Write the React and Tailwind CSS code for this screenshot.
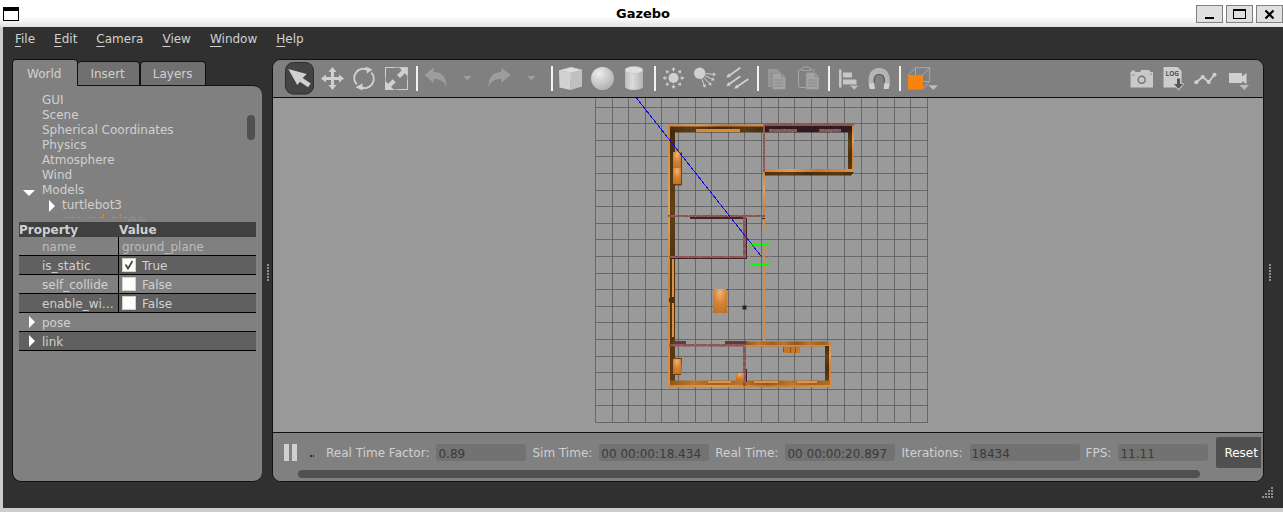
import React from "react";

const MENUS = ["File", "Edit", "Camera", "View", "Window", "Help"];
const TREE = ["GUI", "Scene", "Spherical Coordinates", "Physics", "Atmosphere", "Wind"];

function Icon({ children, wide }) {
  return (
    <svg
      viewBox={wide ? "0 0 38 33" : "0 0 32 33"}
      className={wide ? "h-[33px] w-[38px]" : "h-[33px] w-8"}
      fill="none"
      aria-hidden="true"
    >
      {children}
    </svg>
  );
}

function Tool({ label, children, wide }) {
  return (
    <button type="button" aria-label={label} className="shrink-0">
      <Icon wide={wide}>{children}</Icon>
    </button>
  );
}

function Separator() {
  return (
    <div className="flex h-[25px] w-[7px] shrink-0 justify-end pr-px">
      <div className="w-0.5 bg-[#f4f2ee]" />
    </div>
  );
}

const L = "#d0d0d0";
const D = "#9d9d9d";

function ray(cx, cy, angle, r0, r1, key) {
  const a = (angle * Math.PI) / 180;
  const c = Math.cos(a);
  const s = Math.sin(a);
  const bx = cx + c * (r1 - 3);
  const by = cy + s * (r1 - 3);
  return (
    <g key={key}>
      <path d={`M${cx + c * r0} ${cy + s * r0}L${bx} ${by}`} stroke={L} strokeWidth="1" />
      <path
        d={`M${cx + c * r1} ${cy + s * r1}L${bx - s * 2} ${by + c * 2}L${bx + s * 2} ${by - c * 2}Z`}
        fill={L}
      />
    </g>
  );
}

function Toolbar() {
  return (
    <div className="flex h-[38px] shrink-0 items-center border-b border-[#111] bg-[#808080] pl-[11px] pr-[9px]">
      <Tool label="Select">
        <rect x="1.5" y="0.5" width="28" height="31.5" rx="8" fill="#444" stroke="#2b2b2b" />
        <path d="M4.3 7L22.7 12L18.7 16L26.7 21.5L24 25.2L16 19.7L13.3 23Z" fill={L} />
      </Tool>
      <Tool label="Translate">
        <path
          d="M16.5 5L20.5 10H18V15H23V12.5L28 16.5L23 20.5V18H18V23H20.5L16.5 28L12.5 23H15V18H10V20.5L5 16.5L10 12.5V15H15V10H12.5Z"
          fill={L}
        />
      </Tool>
      <Tool label="Rotate">
        <path d="M8.800 22.300A9.200 9.200 0 0 1 18.500 7.300" stroke={L} strokeWidth="2" />
        <path d="M23.400 10.700A9.200 9.200 0 0 1 13.500 25.500" stroke={L} strokeWidth="2" />
        <path d="M17.500 4.500L24.500 7.500L19 11.500Z" fill={L} />
        <path d="M14.500 21.300V28.500L7.500 25.300Z" fill={L} />
      </Tool>
      <Tool label="Scale">
        <path d="M15 5.5H5.5V15M5.5 22V27.5H11M18 27.5H27.5V18" stroke={L} />
        <path d="M5.5 5.5H27.5V27.5H5.5Z" stroke={L} strokeOpacity="0.6" />
        <path d="M27.7 5.2V14L24.8 11.3L20 16L17 13L21.8 8.2L19 5.2Z" fill={L} />
        <path d="M5.2 27.8V19L8.2 21.8L12.8 17.2L15.8 20.2L11 24.8L14 27.8Z" fill={L} />
      </Tool>
      <Separator />
      <Tool label="Undo">
        <path d="M5.3 13L14.7 5.7V10C23 10 28 15.500 27.300 25.300C25.500 19.500 21.500 17 14.700 17V21Z" fill={D} />
      </Tool>
      <Tool label="Undo history">
        <path d="M12.500 14H20.500L16.500 18.500Z" fill={D} />
      </Tool>
      <Tool label="Redo">
        <path d="M27.700 13L18.300 5.700V10C10 10 5 15.500 5.700 25.300C7.500 19.500 11.500 17 18.300 17V21Z" fill={D} />
      </Tool>
      <Tool label="Redo history">
        <path d="M12.500 14H20.500L16.500 18.500Z" fill={D} />
      </Tool>
      <Separator />
      <Tool label="Box">
        <path d="M5 8.500L17 10.500L16.500 28L5.500 25.500Z" fill="#d2d2d2" />
        <path d="M17 10.500L28 8V24.500L16.500 28Z" fill="#c0c0c0" />
        <path d="M5 8.500L17 5.200L28 8L17 10.500Z" fill="#dedede" stroke="#cfcfcf" strokeWidth="0.5" />
      </Tool>
      <Tool label="Sphere">
        <defs>
          <radialGradient id="ball" cx="0.35" cy="0.28" r="0.75">
            <stop offset="0" stopColor="#ededed" />
            <stop offset="0.5" stopColor="#cfcfcf" />
            <stop offset="1" stopColor="#b0b0b0" />
          </radialGradient>
        </defs>
        <circle cx="16.500" cy="16.500" r="11.500" fill="url(#ball)" />
      </Tool>
      <Tool label="Cylinder">
        <defs>
          <linearGradient id="can">
            <stop offset="0" stopColor="#bcbcbc" />
            <stop offset="0.4" stopColor="#dcdcdc" />
            <stop offset="1" stopColor="#b2b2b2" />
          </linearGradient>
        </defs>
        <path d="M7 8V24.500C7 29 25 29 25 24.500V8Z" fill="url(#can)" />
        <ellipse cx="16" cy="8" rx="9" ry="3.600" fill="#dedede" stroke="#bbb" strokeWidth="0.6" />
      </Tool>
      <Separator />
      <Tool label="Point light">
        <circle cx="16.500" cy="16" r="5" fill={L} />
        {[0, 45, 90, 135, 180, 225, 270, 315].map((a) => ray(16.5, 16, a, 6.5, 11, a))}
      </Tool>
      <Tool label="Spot light">
        <circle cx="10.700" cy="11.300" r="5.700" fill={L} />
        {ray(10.7, 11.3, 4, 6, 16.5, 1)}
        {ray(10.7, 11.3, 25, 6, 16.5, 2)}
        {ray(10.7, 11.3, 46, 6, 17, 3)}
        {ray(10.7, 11.3, 69, 6, 15.5, 4)}
      </Tool>
      <Tool label="Directional light">
        <path d="M19.300 5.700L8 13.700M19.300 14.300L8 22.300M27.300 17L16 24.800" stroke={L} strokeWidth="1.800" />
        <path
          d="M5.300 15.600L7.300 11.500L9.700 14.900ZM5.300 24.200L7.300 20.100L9.700 23.500ZM13.300 26.700L15.300 22.600L17.700 26Z"
          fill={L}
        />
      </Tool>
      <Separator />
      <Tool label="Copy">
        <path d="M8 7H17L21 11V25H8Z" fill="#989898" />
        <path d="M9.500 12H18M9.500 15H18M9.500 18H18M9.500 21H18" stroke="#878787" />
        <path d="M12.500 11H21.500L25.500 15V27.500H12.500Z" fill="#a3a3a3" stroke="#8a8a8a" strokeWidth="0.700" />
        <path d="M21.500 11V15H25.500M14.500 18H23.500M14.500 21H23.500M14.500 24H23.500" stroke="#888" />
      </Tool>
      <Tool label="Paste">
        <rect x="6.500" y="7.500" width="15.500" height="18" rx="1.500" stroke="#a5a5a5" />
        <path d="M10 8.500V6.500L12 5H16L18.500 6.500V8.500Z" fill="#808080" stroke="#a5a5a5" />
        <path d="M14 10.500H23L27 14.500V27.500H14Z" fill="#a3a3a3" stroke="#8a8a8a" strokeWidth="0.700" />
        <path d="M23 10.500V14.500H27M16 18H25M16 21H25M16 24H25" stroke="#888" />
      </Tool>
      <Separator />
      <Tool label="Align">
        <path d="M8 7.500H10.500V25.500H8ZM12 10.500H21V15.500H12ZM12 17.500H25.500V22.500H12Z" fill="#c6c6c6" />
        <path d="M18.500 23.300H28L23.300 28Z" fill="#bdbdbd" stroke="#808080" strokeWidth="0.500" />
      </Tool>
      <Tool label="Snap">
        <path d="M7 27C3.500 16 6.500 6 16.200 6S29 16 25.500 27H20.700C22.500 18 21 13 16.200 13S10 18 11.800 27Z" fill="#b5b5b5" />
        <path d="M11.300 20.500C10.500 15 12.500 12.500 16.200 12.500S22 15 21.200 20.500" stroke="#555" strokeWidth="1.200" />
        <path d="M5.700 21.500H11.200L11.800 27H7ZM26.800 21.500H21.300L20.700 27H25.500Z" fill="#d2d2d2" />
      </Tool>
      <Separator />
      <Tool label="View angle" wide>
        <path
          d="M6.500 13L13.500 5.700H27.700V19.500L20.500 27M20.500 13L27.700 5.700M13.500 5.700V19.500H27.700M6.500 27L13.500 19.500"
          stroke="#adadad"
          strokeWidth="0.900"
        />
        <rect x="6" y="13" width="15" height="14.500" fill="#fa8310" />
        <path d="M26.500 23.300H36L31.300 28Z" fill="#bdbdbd" />
      </Tool>
      <div className="min-w-0 flex-1" />
      <Tool label="Screenshot">
        <path d="M6 10H14L15.500 8H23L24.500 10H27V25.500H4.500V10Z" fill="#c9c9c9" />
        <path d="M5.500 8.500H9V10H5.500Z" fill="#c9c9c9" />
        <circle cx="15.700" cy="17.700" r="3.500" stroke="#777" strokeWidth="1.500" />
        <path d="M6 13H9M24 12H26" stroke="#909090" />
      </Tool>
      <Tool label="Log data">
        <path d="M5.500 5H19.500L23.500 9V25.500H5.500Z" fill="#cdcdcd" />
        <text x="7.500" y="14" fontSize="6.500" fontWeight="700" fontFamily="Open Sans, sans-serif" fill="#555">
          LOG
        </text>
        <path d="M20.500 28.500L14.500 21.500H26.500Z" fill="#cdcdcd" />
        <path d="M19 16.500H22V22H25L20.500 27L16 22H19Z" fill="#555" />
      </Tool>
      <Tool label="Plot">
        <path d="M6.300 20.300L12.700 15L18.700 20L24.500 12.500" stroke={L} strokeWidth="1.800" />
        <circle cx="6.300" cy="20.300" r="2" fill={L} />
        <circle cx="12.700" cy="15" r="2" fill={L} />
        <circle cx="18.700" cy="20" r="2" fill={L} />
        <circle cx="24.500" cy="12.700" r="2" fill={L} />
      </Tool>
      <Tool label="Record video">
        <path d="M7 11H20V14.500L24.500 11V22L20 19V21H7Z" fill={L} />
        <path d="M17.500 23H27L22.300 28Z" fill="#bdbdbd" />
      </Tool>
    </div>
  );
}

function Scene() {
  const lines = Array.from({ length: 21 }, (_, i) => Math.round(i * 16.6));
  return (
    <div className="flex min-h-0 flex-1 bg-[#9a9a9a]">
      <svg viewBox="273 98 990 334" className="h-full w-full" role="img" aria-label="3D scene, top view">
        <defs>
          <linearGradient id="woodV" x2="0" y2="1">
            <stop offset="0" stopColor="#d08438" />
            <stop offset="0.3" stopColor="#e2a05a" />
            <stop offset="0.6" stopColor="#cf8134" />
            <stop offset="1" stopColor="#dc9044" />
          </linearGradient>
          <linearGradient id="woodH">
            <stop offset="0" stopColor="#d08438" />
            <stop offset="0.3" stopColor="#e39a4b" />
            <stop offset="0.6" stopColor="#c4772b" />
            <stop offset="1" stopColor="#dc9044" />
          </linearGradient>
          <linearGradient id="darkH">
            <stop offset="0" stopColor="#4a2e10" />
            <stop offset="0.25" stopColor="#5f3c14" />
            <stop offset="0.5" stopColor="#442a0f" />
            <stop offset="0.8" stopColor="#583a12" />
            <stop offset="1" stopColor="#452b0e" />
          </linearGradient>
          <linearGradient id="darkV" x2="0" y2="1">
            <stop offset="0" stopColor="#42290e" />
            <stop offset="0.3" stopColor="#624016" />
            <stop offset="0.6" stopColor="#4a3012" />
            <stop offset="1" stopColor="#5c3c14" />
          </linearGradient>
          <radialGradient id="table" cx="0.5" cy="0.15" r="0.9">
            <stop offset="0" stopColor="#f0b678" />
            <stop offset="0.5" stopColor="#d58435" />
            <stop offset="1" stopColor="#bd7024" />
          </radialGradient>
          <linearGradient id="planks" x2="0.3" spreadMethod="reflect">
            <stop offset="0" stopColor="#8f5519" />
            <stop offset="0.5" stopColor="#bd762d" />
            <stop offset="1" stopColor="#99601f" />
          </linearGradient>
          <pattern id="marble" width="13" height="7" patternUnits="userSpaceOnUse">
            <rect width="13" height="7" fill="#8d5553" />
            <path d="M0 0h1v1h-1zM5 1h2v1h-2zM2 3h1v1h-1zM9 4h1v1h-1zM11 2h1v1h-1zM6 6h1v1h-1z" fill="#a4685b" />
            <path d="M3 0h1v1h-1zM8 2h1v1h-1zM0 4h1v1h-1zM5 5h1v1h-1zM11 6h1v1h-1z" fill="#764654" />
            <path d="M4 3h1v1h-1zM9 0h1v1h-1zM12 5h1v1h-1z" fill="#a27c86" />
          </pattern>
        </defs>
        {lines.map((p) => (
          <path
            key={p}
            d={`M${595.5 + p} 98V422.500M595.500 ${422.5 - p}H928`}
            stroke="#555"
            strokeOpacity="0.75"
            strokeWidth="1"
          />
        ))}
        <rect x="273" y="90" width="990" height="8" fill="#808080" />

        <path d="M669 125H765V132.500H675V344H669Z" fill="url(#darkH)" />
        <rect x="670" y="130" width="5" height="254" fill="url(#darkV)" />
        <rect x="668" y="124.500" width="2" height="262" fill="url(#woodV)" />
        <rect x="668" y="124.500" width="96" height="2" fill="url(#woodH)" />
        <rect x="696" y="129" width="44" height="3" fill="#d88a3d" />

        <rect x="764" y="125" width="90" height="7.500" fill="#2f1c22" />
        <rect x="764" y="124" width="90" height="2" fill="url(#marble)" />
        <rect x="769" y="129" width="28" height="3" fill="url(#marble)" />
        <rect x="819" y="129" width="22" height="3" fill="url(#marble)" />
        <rect x="848" y="131" width="5" height="41" fill="url(#darkV)" />
        <rect x="852" y="125.500" width="2" height="48" fill="url(#woodV)" />
        <path d="M764 172H854L851 175.500H764Z" fill="url(#darkH)" />
        <rect x="764" y="169" width="89" height="3" fill="url(#woodH)" />

        <rect x="763" y="125" width="2" height="47" fill="url(#marble)" />
        <rect x="763" y="172" width="2" height="58" fill="url(#woodV)" />
        <rect x="763" y="245" width="2" height="97" fill="#d18b4b" />

        <rect x="690" y="217" width="55" height="2" fill="#432329" />
        <rect x="668" y="215" width="97" height="2" fill="url(#marble)" />
        <rect x="743" y="216" width="3" height="42" fill="url(#marble)" />
        <rect x="746" y="218" width="1" height="40" fill="#432329" />
        <rect x="670" y="258" width="77" height="1" fill="#432329" />
        <rect x="669" y="256" width="76" height="2" fill="url(#marble)" />
        <rect x="762" y="218" width="3" height="1" fill="#3b2410" />

        <rect x="672" y="259" width="2" height="38" fill="#dc9144" />
        <rect x="672" y="303" width="2" height="34" fill="#dc9144" />
        <rect x="669" y="298" width="5" height="4" fill="#4b2d10" />

        <path d="M673 152H682V185.500H674Z" fill="#6b3f12" />
        <rect x="673" y="152" width="8" height="16" fill="url(#table)" />
        <rect x="673" y="168" width="8" height="16" fill="url(#table)" />
        <rect x="713" y="289" width="14" height="24" fill="url(#table)" />
        <rect x="727" y="289" width="1" height="1" fill="#222" />

        <rect x="673" y="341" width="13" height="4" fill="#65383a" />
        <rect x="725" y="341" width="22" height="4" fill="#65383a" />
        <rect x="669" y="344" width="76" height="2.500" fill="url(#marble)" />
        <path d="M746 341.500H828L830 346.500H746Z" fill="url(#planks)" />
        <rect x="746" y="345" width="85" height="1.500" fill="#d68a3c" />
        <rect x="825" y="346" width="4" height="36" fill="url(#darkV)" />
        <rect x="829" y="342.500" width="2" height="44" fill="url(#woodV)" />
        <rect x="670" y="380.500" width="160" height="6" fill="url(#planks)" />
        <rect x="668" y="385" width="163" height="2" fill="url(#woodH)" />
        <rect x="708" y="381" width="23" height="2" fill="#e09345" />
        <rect x="754" y="381" width="24" height="2" fill="#e09345" />
        <rect x="797" y="381" width="20" height="2" fill="#e09345" />
        <rect x="743" y="346" width="3" height="40" fill="url(#marble)" />
        <rect x="746" y="369" width="1" height="13" fill="#432329" />
        <path d="M673 358H682L681 375H673Z" fill="#6b3f12" />
        <rect x="673" y="359" width="8" height="15" fill="url(#table)" />
        <rect x="736" y="373" width="8" height="8" fill="url(#table)" />
        <rect x="783" y="347" width="17" height="6" fill="#c4762a" />
        <path d="M783.500 347V352M790.500 347V353M795.500 347V353" stroke="#8a5219" />

        <path d="M742 305H747V310H742Z" fill="#3a3a3a" fillOpacity="0.5" />
        <path d="M743 306H746V309H743Z" fill="#222" />

        <path d="M636.500 98L761 256" stroke="#1010e0" strokeWidth="1" shapeRendering="crispEdges" />
        <rect x="749.500" y="244.500" width="20" height="20" fill="none" stroke="#00ff00" />
      </svg>
    </div>
  );
}

function Field({ id, label, value, width }) {
  return (
    <>
      <label htmlFor={id} className="h-[17px] shrink-0 whitespace-nowrap pr-px pt-0.5">
        {label}
      </label>
      <input
        id={id}
        readOnly
        defaultValue={value}
        className={`h-[17px] rounded-[3px] bg-[#727272] px-0.5 pt-0.5 leading-[15px] text-[#3a3a3a] outline-none ${width}`}
      />
    </>
  );
}

function StatusBar() {
  return (
    <div className="box-content h-12 shrink-0 border-t border-[#111] bg-[#808080]">
      <div className="flex h-[37px] items-center gap-[6px] overflow-hidden pb-0.5 pl-[11px] pr-0.5 pt-1">
        <button type="button" aria-label="Pause" className="flex h-[17px] shrink-0 gap-[3px]">
          <span className="w-[5px] bg-[#d0d0d0]" />
          <span className="w-[5px] bg-[#d0d0d0]" />
        </button>
        <span className="flex h-[9px] w-[17px] shrink-0 items-end justify-center gap-px" aria-hidden="true">
          <span className="h-0.5 w-[2px] bg-[#303030]" />
          <span className="h-0.5 w-px bg-[#303030]" />
        </span>
        <Field id="rtf" label="Real Time Factor:" value="0.89" width="w-[90px] shrink-0" />
        <Field id="sim" label="Sim Time:" value="00 00:00:18.434" width="w-[110px] shrink-0" />
        <Field id="real" label="Real Time:" value="00 00:00:20.897" width="w-[110px] shrink-0" />
        <Field id="iter" label="Iterations:" value="18434" width="w-[110px] shrink-0" />
        <Field id="fps" label="FPS:" value="11.11" width="w-[90px] shrink-0" />
        <button
          type="button"
          className="ml-0.5 h-[31px] min-w-0 flex-1 rounded-l-[2px] bg-[#505050] pl-2 pt-0.5 text-left text-white"
        >
          Reset
        </button>
      </div>
      <div className="ml-[25px] mr-[63px] h-2 rounded-full bg-[#505050]" />
    </div>
  );
}

function Check({ id, checked, label }) {
  return (
    <label htmlFor={id} className="flex items-center gap-[6px]">
      <span className="relative flex">
        <input
          id={id}
          type="checkbox"
          defaultChecked={checked}
          className="peer h-[14px] w-[14px] appearance-none border border-[#d4d0c8] bg-[#fffdfa]"
        />
        <svg viewBox="0 0 14 14" className="pointer-events-none absolute inset-0 hidden peer-checked:block" fill="none">
          <path d="M3.500 6.500L6 10.500L10.500 3" stroke="#444" strokeWidth="1.700" />
        </svg>
      </span>
      <span className="pt-0.5 leading-[16px]">{label}</span>
    </label>
  );
}

function Right() {
  return (
    <svg viewBox="0 0 6 12" className="h-3 w-[6px]" aria-hidden="true">
      <path d="M0 0L6 6L0 12Z" fill="#fff" />
    </svg>
  );
}

function Dots({ vertical }) {
  return (
    <div className={vertical ? "flex flex-col gap-px" : "flex gap-px"} aria-hidden="true">
      {[0, 1, 2, 3, 4, 5].map((i) => (
        <span key={i} className="h-0.5 w-0.5 bg-[#8e8e8e]" />
      ))}
    </div>
  );
}

function Properties() {
  const left = "truncate border-b border-r border-black pb-0 pl-[23px] pr-1 pt-0.5 leading-[16px]";
  const right = "border-b border-black py-0 pl-[3px]";
  return (
    <table className="mx-[6px] w-[237px] table-fixed border-separate border-spacing-0">
      <thead className="bg-[#404040] text-left leading-[13px]">
        <tr>
          <th className="w-[100px] p-0 pt-0.5">Property</th>
          <th className="p-0 pt-0.5">Value</th>
        </tr>
      </thead>
      <tbody>
        <tr className="text-[#bcbcbc]">
          <td className={left}>name</td>
          <td className="border-b border-black pb-0 pl-[3px] pt-0.5 leading-[16px]">ground_plane</td>
        </tr>
        <tr className="bg-[#606060]">
          <td className={left}>is_static</td>
          <td className={right}>
            <Check id="is_static" checked label="True" />
          </td>
        </tr>
        <tr>
          <td className={left}>self_collide</td>
          <td className={right}>
            <Check id="self_collide" label="False" />
          </td>
        </tr>
        <tr className="bg-[#606060]">
          <td className={left}>enable_wind</td>
          <td className={right}>
            <Check id="enable_wind" label="False" />
          </td>
        </tr>
        <tr>
          <td colSpan={2} className="border-b border-black p-0">
            <div className="flex items-center gap-[7px] pl-[10px]">
              <Right />
              <span className="pt-0.5 leading-[16px]">pose</span>
            </div>
          </td>
        </tr>
        <tr className="bg-[#606060]">
          <td colSpan={2} className="border-b border-black p-0">
            <div className="flex items-center gap-[7px] pl-[10px]">
              <Right />
              <span className="pt-0.5 leading-[16px]">link</span>
            </div>
          </td>
        </tr>
      </tbody>
    </table>
  );
}

function SidePanel() {
  return (
    <aside className="flex w-[250px] shrink-0 flex-col">
      <div role="tablist" className="flex h-[26px] shrink-0 items-end">
        <button
          type="button"
          role="tab"
          aria-selected="true"
          className="relative z-10 -mb-px h-[27px] rounded-t-[4px] border border-b-0 border-[#111] bg-[#808080] pl-[14px] pr-4 pt-0.5"
        >
          World
        </button>
        <button
          type="button"
          role="tab"
          className="h-6 rounded-t-[4px] border border-b-0 border-l-0 border-[#111] bg-[#707070] pl-3 pr-[14px] pt-0.5"
        >
          Insert
        </button>
        <button
          type="button"
          role="tab"
          className="h-6 rounded-t-[4px] border border-b-0 border-[#111] bg-[#707070] px-3 pt-0.5"
        >
          Layers
        </button>
      </div>
      <div className="flex min-h-0 flex-1 flex-col rounded-b-[9px] rounded-tr-[9px] border border-r-0 border-[#111] bg-[#808080]">
        <div className="flex h-[132px] shrink-0 overflow-hidden pr-[7px] pt-[7px]">
          <ul className="flex-1 leading-[15px]">
            {TREE.map((t) => (
              <li key={t} className="pl-[29px]">
                {t}
              </li>
            ))}
            <li className="flex items-center gap-[7px] pl-[10px]">
              <svg viewBox="0 0 12 6" className="mt-1 h-[6px] w-3" aria-hidden="true">
                <path d="M0 0H12L6 6Z" fill="#fff" />
              </svg>
              Models
            </li>
            <li className="flex items-center gap-[7px] pl-9">
              <Right />
              turtlebot3
            </li>
            <li className="pl-[49px] text-[#ee7f18]">ground_plane</li>
          </ul>
          <div className="mt-[22px] h-[25px] w-2 rounded-full bg-[#505050]" />
        </div>
        <div className="flex h-1 shrink-0 items-center justify-center pr-[3px]">
          <Dots />
        </div>
        <Properties />
      </div>
    </aside>
  );
}

export default function App() {
  return (
    <div className="flex h-screen flex-col bg-[#cdcdcd] font-['DejaVu_Sans',sans-serif] text-[12px] leading-[15px] text-[#d0d0d0]">
      <header className="flex h-[27px] shrink-0 items-center bg-linear-to-b from-white from-60% to-[#e2e2e2] pl-[3px]">
        <div className="flex flex-1">
          <svg viewBox="0 0 16 14" className="h-[14px] w-4" aria-hidden="true">
            <rect x="0.5" y="0.5" width="15" height="13" fill="#fff" stroke="#000" />
            <rect width="16" height="4" />
          </svg>
        </div>
        <h1 className="text-[13px] font-bold text-black">Gazebo</h1>
        <div className="flex flex-1 justify-end gap-[3px]">
          <button type="button" aria-label="Minimize" className="h-[18px] w-[27px] border border-[#808080] bg-[#e0e0e0]">
            <svg viewBox="0 0 25 16" className="h-4 w-[25px]">
              <path d="M8 11H17V13H8Z" />
            </svg>
          </button>
          <button type="button" aria-label="Maximize" className="h-[18px] w-[27px] border border-[#808080] bg-[#e0e0e0]">
            <svg viewBox="0 0 25 16" className="h-4 w-[25px]">
              <path d="M6 3H19V13H6ZM7 5V12H18V5Z" fillRule="evenodd" />
            </svg>
          </button>
          <button type="button" aria-label="Close" className="h-[18px] w-[27px] border border-[#808080] bg-[#e0e0e0]">
            <svg viewBox="0 0 25 16" className="h-4 w-[25px]">
              <path d="M8.500 4.500L16.500 12.500M16.500 4.500L8.500 12.500" stroke="#000" strokeWidth="2.200" />
            </svg>
          </button>
        </div>
      </header>
      <div className="mb-1 ml-[3px] flex min-h-0 flex-1 flex-col bg-[#303030] pl-[9px]">
        <nav className="mb-2 flex h-6 shrink-0 items-center gap-[19px] pl-[3px]">
          {MENUS.map((m) => (
            <button key={m} type="button">
              <span className="underline underline-offset-[3px]">{m[0]}</span>
              {m.slice(1)}
            </button>
          ))}
        </nav>
        <div className="flex min-h-0 flex-1">
          <SidePanel />
          <div className="flex w-[10px] shrink-0 items-center justify-end pr-[3px] pt-1">
            <Dots vertical />
          </div>
          <main className="flex min-w-0 flex-1 flex-col overflow-hidden rounded-[9px] border border-[#111] bg-[#808080]">
            <Toolbar />
            <Scene />
            <StatusBar />
          </main>
          <div className="flex w-[19px] shrink-0 items-center pl-[5px] pt-1">
            <Dots vertical />
          </div>
        </div>
        <footer className="flex h-[26px] shrink-0 justify-end pr-[9px] pt-[5px]">
          <svg viewBox="0 0 12 12" className="h-3 w-3" fill="#8e8e8e" aria-hidden="true">
            <path d="M9 0h2v2h-2zM6 3h2v2h-2zM9 3h2v2h-2zM3 6h2v2h-2zM6 6h2v2h-2zM9 6h2v2h-2zM0 9h2v2h-2zM3 9h2v2h-2zM6 9h2v2h-2zM9 9h2v2h-2z" />
          </svg>
        </footer>
      </div>
    </div>
  );
}
